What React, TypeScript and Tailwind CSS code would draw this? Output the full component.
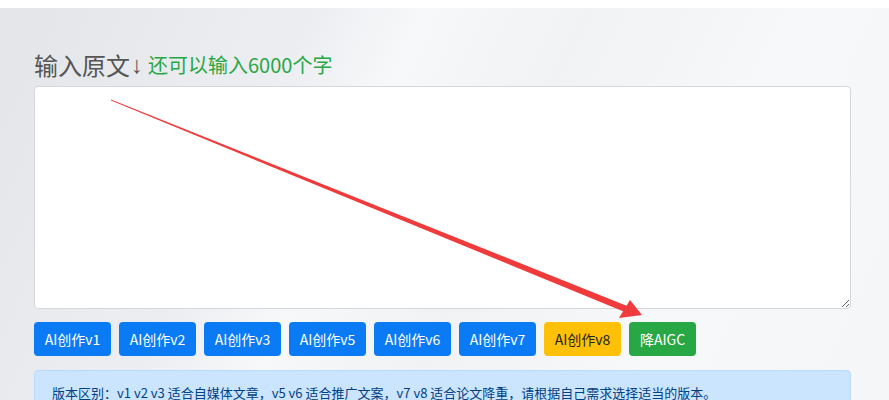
const versions = ["v1", "v2", "v3", "v5", "v6", "v7"];

const ArrowOverlay = () => (
    <svg className="pointer-events-none absolute left-0 top-0" width="889" height="400" viewBox="0 0 889 400">
        <polygon points="111,99.4 627.2,306 624.8,312 111,100.6" fill="#ef3b3b" />
        <polygon points="642,315 630,300 619,318" fill="#ef3b3b" />
    </svg>
);

export default function App() {
    return (
        <div
            className="relative h-[400px] w-[889px] overflow-hidden bg-[linear-gradient(115deg,#e4e5e9_0%,#eceef1_30%,#f7f8fa_40%,#f1f2f4_55%,#f7f8f9_75%,#f5f6f8_100%)]"
            style={{ fontFamily: '"Noto Sans CJK SC", "Noto Sans", sans-serif' }}
        >
            <div className="h-2 bg-white"></div>
            <div className="pl-[34px] pr-[38px] pt-[41px]">
                <div className="mb-[5px] flex h-[32px] items-center whitespace-nowrap">
                    <span className="text-[24px] leading-[32px] text-[#555]">输入原文</span>
                    <span className="ml-[1px] text-[24px] leading-[32px] text-[#555]" style={{ fontFamily: '"Liberation Sans", sans-serif' }}>↓</span>
                    <span className="ml-[5px] text-[20px] leading-[32px] text-[#28a745]">还可以输入6000个字</span>
                </div>
                <textarea className="block h-[223px] w-full rounded border border-[#d5d7db] bg-white p-2 text-sm outline-none"></textarea>
                <div className="mt-[13px] flex gap-2">
                    {versions.map((v) => (
                        <button
                            key={v}
                            className="h-[34px] w-[77px] rounded bg-[#0a7bf5] text-center text-[14px] text-white"
                        >
                            AI创作{v}
                        </button>
                    ))}
                    <button className="h-[34px] w-[77px] rounded bg-[#ffc107] text-center text-[14px] text-[#212529]">
                        AI创作v8
                    </button>
                    <button className="h-[34px] w-[67px] rounded bg-[#28a745] text-center text-[14px] text-white">
                        降AIGC
                    </button>
                </div>
                <div className="mt-[14px] rounded border border-[#b8daff] bg-[#cce5ff] px-[17px] py-[12px] text-[13px] leading-[20px] text-[#004085]">
                    版本区别：v1 v2 v3 适合自媒体文章，v5 v6 适合推广文案，v7 v8 适合论文降重，请根据自己需求选择适当的版本。
                </div>
            </div>
            <ArrowOverlay />
        </div>
    );
}
